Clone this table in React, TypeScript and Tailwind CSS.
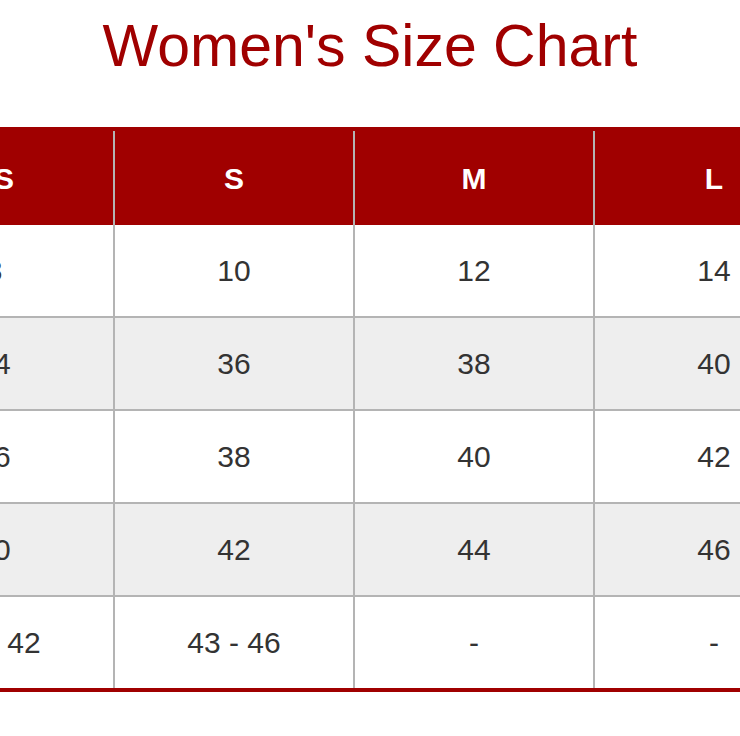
const COLUMNS = [
  { size: 'XS', values: ['8', '34', '36', '40', '39 - 42'] },
  { size: 'S', values: ['10', '36', '38', '42', '43 - 46'] },
  { size: 'M', values: ['12', '38', '40', '44', '-'] },
  { size: 'L', values: ['14', '40', '42', '46', '-'] },
  { size: 'XL', values: ['16', '42', '44', '48', '-'] },
];

const ROWS = [0, 1, 2, 3, 4];

export default function App() {
  return (
    <div className="h-[736px] w-[740px] overflow-hidden bg-white font-['Liberation_Sans',Arial,sans-serif]">
      <h1 className="pt-[17px] text-center text-[59px] leading-none font-normal text-[#a00000]">
        Women&apos;s Size Chart
      </h1>

      <div className="mt-[51px] ml-[-125px] w-[1200px] border-y-4 border-[#a00000]">
        <div className="grid h-[94px] grid-cols-5 bg-[#a00000]">
          {COLUMNS.map((col, i) => (
            <div
              key={col.size}
              className={
                i < COLUMNS.length - 1
                  ? 'flex items-center justify-center border-r-2 border-[#b4b4b4] text-[30px] font-bold text-white'
                  : 'flex items-center justify-center text-[30px] font-bold text-white'
              }
            >
              {col.size}
            </div>
          ))}
        </div>

        {ROWS.map((r) => (
          <div
            key={r}
            className={
              (r % 2 === 1 ? 'bg-[#eeeeee] ' : 'bg-white ') +
              (r < ROWS.length - 1 ? 'h-[93px] border-b-2 border-[#b4b4b4] ' : 'h-[91px] ') +
              'grid grid-cols-5'
            }
          >
            {COLUMNS.map((col, i) => (
              <div
                key={col.size}
                className={
                  i < COLUMNS.length - 1
                    ? 'flex items-center justify-center border-r-2 border-[#b4b4b4] text-[30px] text-[#333333]'
                    : 'flex items-center justify-center text-[30px] text-[#333333]'
                }
              >
                {col.values[r]}
              </div>
            ))}
          </div>
        ))}
      </div>
    </div>
  );
}
